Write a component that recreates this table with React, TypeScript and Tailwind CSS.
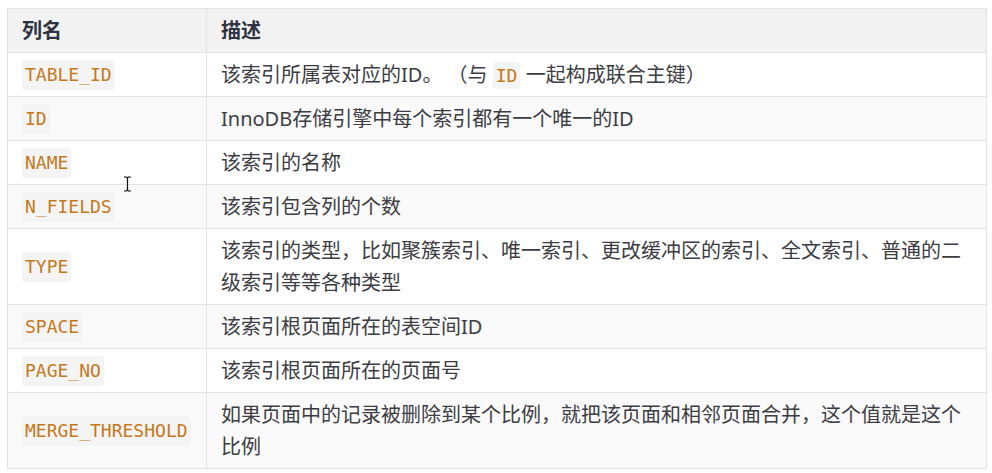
const rows: { name: string; desc: React.ReactNode }[] = [
  {
    name: "TABLE_ID",
    desc: (
      <>
        该索引所属表对应的ID。 （与 <Code>ID</Code> 一起构成联合主键）
      </>
    ),
  },
  { name: "ID", desc: "InnoDB存储引擎中每个索引都有一个唯一的ID" },
  { name: "NAME", desc: "该索引的名称" },
  { name: "N_FIELDS", desc: "该索引包含列的个数" },
  {
    name: "TYPE",
    desc: "该索引的类型，比如聚簇索引、唯一索引、更改缓冲区的索引、全文索引、普通的二级索引等等各种类型",
  },
  { name: "SPACE", desc: "该索引根页面所在的表空间ID" },
  { name: "PAGE_NO", desc: "该索引根页面所在的页面号" },
  {
    name: "MERGE_THRESHOLD",
    desc: "如果页面中的记录被删除到某个比例，就把该页面和相邻页面合并，这个值就是这个比例",
  },
];

function Code({ children }: { children: React.ReactNode }) {
  return (
    <code className="rounded-[4px] bg-[#f4f4f4] px-[3px] py-[3px] font-['DejaVu_Sans_Mono',monospace] text-[18px] leading-[24px] text-[#c47a1c]">
      {children}
    </code>
  );
}

export default function App() {
  return (
    <div className="relative min-h-[473px] bg-white pl-[7px] pr-[5px] pt-[8px] font-['Noto_Sans','Noto_Sans_CJK_SC',sans-serif] text-[20px] text-[#3c3c43]">
      <div className="w-[980px] border border-[#e3e3e3]">
        <div className="grid grid-cols-[199px_1fr] bg-[#f2f2f2] font-bold text-[#2d3340]">
          <div className="border-r border-[#e3e3e3] px-[14px] py-[5.5px] leading-[32px]">列名</div>
          <div className="px-[14px] py-[5.5px] leading-[32px]">描述</div>
        </div>
        {rows.map((r, i) => (
          <div
            key={r.name}
            className={`grid grid-cols-[199px_1fr] border-t border-[#e3e3e3] ${i % 2 === 1 ? "bg-[#fafafa]" : "bg-white"}`}
          >
            <div className="flex items-center border-r border-[#e3e3e3] px-[14px] py-[5.5px] leading-[32px]">
              <Code>{r.name}</Code>
            </div>
            <div className="px-[14px] py-[5.5px] pr-[18px] leading-[32px]">{r.desc}</div>
          </div>
        ))}
      </div>
      {/* text cursor over the table */}
      <svg className="absolute left-[123px] top-[176px]" width="9" height="16" viewBox="0 0 9 16">
        <path d="M1 1h2.5l1 1 1-1H8M4.5 2v12M1 15h2.5l1-1 1 1H8" fill="none" stroke="#111" strokeWidth="1.2" />
      </svg>
    </div>
  );
}
